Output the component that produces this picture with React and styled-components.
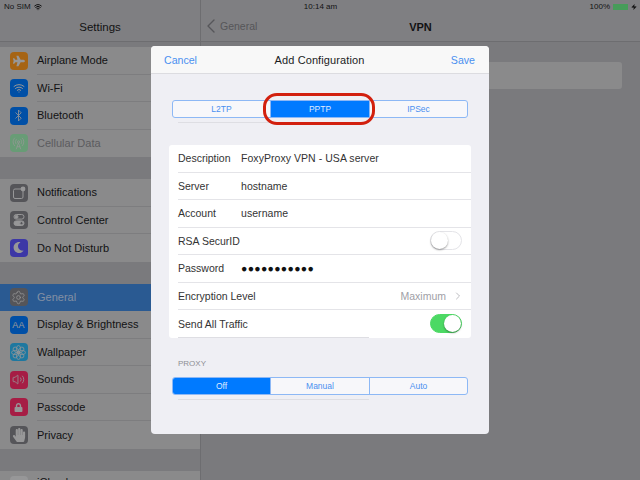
import React from "react";
import styled, { createGlobalStyle } from "styled-components";
import { Wifi, Bluetooth, RadioTower, Settings as Gear, Volume2, ChevronLeft, ChevronRight, Zap } from "lucide-react";
import { FaLock, FaMoon, FaHandPaper, FaPlane } from "react-icons/fa";

const Global = createGlobalStyle`
  html, body { margin: 0; padding: 0; background: #bcbcc0; }
  * { box-sizing: border-box; }
`;

const Page = styled.div`
  position: relative;
  display: flex;
  width: 640px;
  height: 480px;
  overflow: hidden;
  background: #bcbcc0;
  font-family: "Liberation Sans", Arial, sans-serif;
  color: #1c1c1e;
`;

const StatusBar = styled.div`
  position: absolute;
  top: 0;
  left: 0;
  right: 0;
  height: 13px;
  display: grid;
  grid-template-columns: 1fr auto 1fr;
  align-items: center;
  padding: 0 3px 0 4px;
  font-size: 8px;
  line-height: 13px;
`;

const StatusSide = styled.div`
  display: flex;
  align-items: center;
  gap: 3px;
  justify-content: ${(p) => (p.$end ? "flex-end" : "flex-start")};
`;

const Battery = styled.span`
  display: block;
  width: 15px;
  height: 6px;
  background: #6df08a;
  border: 1px solid #6df08a;
  border-right-width: 2px;
`;

const Sidebar = styled.div`
  flex: 0 0 201px;
  border-right: 1px solid #a8a8ac;
`;

const Nav = styled.div`
  display: flex;
  align-items: center;
  justify-content: center;
  position: relative;
  height: 42px;
  padding-top: 13px;
  background: #c4c4c8;
  border-bottom: 1px solid #a8a8ac;
  font-size: ${(p) => (p.$bold ? "11px" : "11.5px")};
  font-weight: ${(p) => (p.$bold ? 700 : 400)};
`;

const BackLink = styled.div`
  position: absolute;
  left: -2px;
  top: 14px;
  display: flex;
  align-items: center;
  font-size: 10.5px;
  font-weight: 400;
  color: #85858a;
  svg {
    margin-right: -3px;
  }
`;

const Group = styled.div`
  margin-top: ${(p) => p.$gap}px;
  background: #d4d4d6;
`;

const Row = styled.div`
  display: flex;
  align-items: center;
  gap: 9.5px;
  height: 27.5px;
  padding-left: 9.5px;
  font-size: 11px;
  background: ${(p) => (p.$selected ? "#418ae1" : "transparent")};
  color: ${(p) => (p.$selected ? "#c8dcfa" : p.$muted ? "#8e8e93" : "inherit")};
`;

const RowText = styled.div`
  flex: 1;
  align-self: stretch;
  display: flex;
  align-items: center;
  border-bottom: ${(p) => (p.$last ? "none" : "1px solid #c0c0c4")};
`;

const Tile = styled.div`
  flex: 0 0 18px;
  width: 18px;
  height: 18px;
  border-radius: 4px;
  display: flex;
  align-items: center;
  justify-content: center;
  background: ${(p) => p.$bg};
  color: ${(p) => p.$fg || "#e8e8ea"};
  font-size: 9px;
  letter-spacing: 0.3px;
`;

const CloudRow = styled(Row)`
  align-items: flex-start;
  padding-top: 5px;
  height: 30px;
`;

const Detail = styled.div`
  flex: 1;
`;

const VpnCard = styled.div`
  height: 27px;
  margin: 20px 18px 0 21px;
  background: #d4d4d6;
  border-radius: 3px;
`;

const Scrim = styled.div`
  position: absolute;
  inset: 0;
  display: flex;
  align-items: center;
  justify-content: center;
  background: rgba(0, 0, 0, 0.35);
`;

const Modal = styled.div`
  position: relative;
  width: 338px;
  height: 388px;
  border-radius: 4px;
  background: #efeff4;
  overflow: hidden;
`;

const ModalHeader = styled.div`
  display: grid;
  grid-template-columns: 1fr auto 1fr;
  align-items: center;
  height: 28px;
  padding: 0 14px 0 13px;
  background: #f8f8f8;
  border-bottom: 1px solid #dcdce0;
  font-size: 11px;
`;

const HeaderTitle = styled.span`
  letter-spacing: 0.1px;
`;

const HeaderLink = styled.span`
  font-size: 10.6px;
  color: #4a90f0;
  text-align: ${(p) => (p.$end ? "right" : "left")};
`;

const ModalBody = styled.div`
  padding: 26px 21px 0 21px;
`;

const Segmented = styled.div`
  display: grid;
  grid-template-columns: 97px 99px 1fr;
  height: 18px;
  border: 1px solid #8db8f5;
  border-radius: 3px;
  overflow: hidden;
  background: #f7f7fa;
`;

const Segment = styled.div`
  display: flex;
  align-items: center;
  justify-content: center;
  font-size: 8.5px;
  color: ${(p) => (p.$active ? "#dfeaff" : "#4a90f0")};
  background: ${(p) => (p.$active ? "#007aff" : "transparent")};
  & + & {
    border-left: 1px solid #8db8f5;
  }
`;

const SegmentRule = styled.div`
  width: ${(p) => p.$width}px;
  height: 1px;
  margin: 4px 0 0 6px;
  background: #dedee3;
`;

const Ring = styled.div`
  position: absolute;
  left: 112px;
  top: 47px;
  width: 112px;
  height: 32px;
  border: 3px solid #d2200e;
  border-radius: 14px;
`;

const FormCard = styled.div`
  margin: 22px 0 0 -3px;
  width: 302px;
  background: #fff;
  border-radius: 3px;
  overflow: hidden;
`;

const FormRow = styled.div`
  display: flex;
  align-items: center;
  height: 27.5px;
  margin-left: 9px;
  padding-right: 9px;
  font-size: 10.5px;
  color: #333;
  border-bottom: ${(p) => (p.$last ? "none" : "1px solid #e4e4e8")};
`;

const FormLabel = styled.div`
  flex: ${(p) => (p.$wide ? "1" : "0 0 63px")};
`;

const FormValue = styled.div`
  flex: 1;
  letter-spacing: 0.05px;
`;

const Dots = styled.div`
  flex: 1;
  font-size: 10.5px;
  letter-spacing: 0.3px;
  color: #111;
`;

const Trailing = styled.div`
  display: flex;
  align-items: center;
  gap: 6px;
  color: #a0a0a6;
  svg {
    margin-right: -2px;
  }
`;

const CardRule = styled.div`
  width: 191px;
  height: 1px;
  margin: -1px 0 0 9px;
  background: #dedee3;
`;

const Toggle = styled.div`
  position: relative;
  width: 32px;
  height: 19px;
  border-radius: 10px;
  background: ${(p) => (p.$on ? "#4cd964" : "#fff")};
  border: 1px solid ${(p) => (p.$on ? "#4cd964" : "#e4e4e8")};
`;

const Knob = styled.div`
  position: absolute;
  top: 0;
  left: ${(p) => (p.$on ? "13px" : "0")};
  width: 17px;
  height: 17px;
  border-radius: 50%;
  background: #fff;
  box-shadow: 0 1px 2px rgba(0, 0, 0, 0.4);
`;

const SectionLabel = styled.div`
  margin: 21px 0 8px 6px;
  height: 10px;
  line-height: 10px;
  font-size: 8px;
  color: #8e8e93;
`;

const NotificationGlyph = () => (
  <svg width="14" height="14" viewBox="0 0 14 14" fill="none">
    <rect x="1.5" y="3" width="9.5" height="9.5" rx="1.5" stroke="#e8e8ea" strokeWidth="1" />
    <circle cx="11" cy="3" r="2.4" fill="#e8e8ea" />
  </svg>
);

const ControlGlyph = () => (
  <svg width="14" height="14" viewBox="0 0 14 14" fill="none" stroke="#e8e8ea">
    <rect x="2" y="1.5" width="10" height="4.6" rx="2.3" />
    <circle cx="4.5" cy="3.8" r="1.5" fill="#e8e8ea" />
    <rect x="2" y="7.9" width="10" height="4.6" rx="2.3" fill="#e8e8ea" />
    <circle cx="9.5" cy="10.2" r="1.6" fill="#838389" />
  </svg>
);

const FlowerGlyph = () => (
  <svg width="15" height="15" viewBox="0 0 16 16" fill="none" stroke="#e8e8ea" strokeWidth="0.8">
    {[0, 45, 90, 135, 180, 225, 270, 315].map((a) => (
      <ellipse key={a} cx="8" cy="4" rx="2.2" ry="3.4" transform={`rotate(${a} 8 8)`} />
    ))}
  </svg>
);

const groups = [
  {
    gap: 5,
    rows: [
      { label: "Airplane Mode", bg: "#ff9a20", icon: <FaPlane size={12} /> },
      { label: "Wi-Fi", bg: "#007aff", icon: <Wifi size={12} strokeWidth={2} /> },
      { label: "Bluetooth", bg: "#007aff", icon: <Bluetooth size={13} strokeWidth={1.5} /> },
      { label: "Cellular Data", bg: "#a0f0b5", muted: true, icon: <RadioTower size={13} strokeWidth={1.3} /> },
    ],
  },
  {
    gap: 22,
    rows: [
      { label: "Notifications", bg: "#838389", icon: <NotificationGlyph /> },
      { label: "Control Center", bg: "#838389", icon: <ControlGlyph /> },
      { label: "Do Not Disturb", bg: "#5c55ff", icon: <FaMoon size={11} /> },
    ],
  },
  {
    gap: 22,
    rows: [
      { label: "General", bg: "#838389", selected: true, icon: <Gear size={15} strokeWidth={1.2} /> },
      { label: "Display & Brightness", bg: "#007aff", icon: "AA" },
      { label: "Wallpaper", bg: "#2eb8f6", icon: <FlowerGlyph /> },
      { label: "Sounds", bg: "#ff2d6a", icon: <Volume2 size={13} strokeWidth={1.5} /> },
      { label: "Passcode", bg: "#ff2d6a", icon: <FaLock size={9} /> },
      { label: "Privacy", bg: "#838389", icon: <FaHandPaper size={14} /> },
    ],
  },
];

const Segments = ({ items, active }) => (
  <Segmented>
    {items.map((item) => (
      <Segment key={item} $active={item === active}>{item}</Segment>
    ))}
  </Segmented>
);

export default function App() {
  return (
    <Page>
      <Global />
      <Sidebar>
        <Nav>Settings</Nav>
        {groups.map((group, g) => (
          <Group key={g} $gap={group.gap}>
            {group.rows.map((row, i) => (
              <Row key={row.label} $selected={row.selected} $muted={row.muted}>
                <Tile $bg={row.bg}>{row.icon}</Tile>
                <RowText $last={row.selected || i === group.rows.length - 1}>{row.label}</RowText>
              </Row>
            ))}
          </Group>
        ))}
        <Group $gap={22}>
          <CloudRow>
            <Tile $bg="#e8e8ea">
              <svg width="14" height="14" viewBox="0 0 14 14"><circle cx="7" cy="6" r="3.5" fill="#1f86d8" /></svg>
            </Tile>
            <div>iCloud</div>
          </CloudRow>
        </Group>
      </Sidebar>
      <Detail>
        <Nav $bold>
          <BackLink><ChevronLeft size={24} strokeWidth={1.4} />General</BackLink>
          VPN
        </Nav>
        <VpnCard />
      </Detail>
      <StatusBar>
        <StatusSide>
          No SIM
          <Wifi size={8} strokeWidth={3} />
        </StatusSide>
        <div>10:14 am</div>
        <StatusSide $end>
          100%
          <Battery />
          <Zap size={6} fill="#1c1c1e" strokeWidth={1} />
        </StatusSide>
      </StatusBar>
      <Scrim>
        <Modal>
          <ModalHeader>
            <HeaderLink>Cancel</HeaderLink>
            <HeaderTitle>Add Configuration</HeaderTitle>
            <HeaderLink $end>Save</HeaderLink>
          </ModalHeader>
          <ModalBody>
            <Segments items={["L2TP", "PPTP", "IPSec"]} active="PPTP" />
            <SegmentRule $width={92} />
            <FormCard>
              <FormRow><FormLabel>Description</FormLabel><FormValue>FoxyProxy VPN - USA server</FormValue></FormRow>
              <FormRow><FormLabel>Server</FormLabel><FormValue>hostname</FormValue></FormRow>
              <FormRow><FormLabel>Account</FormLabel><FormValue>username</FormValue></FormRow>
              <FormRow>
                <FormLabel $wide>RSA SecurID</FormLabel>
                <Toggle><Knob /></Toggle>
              </FormRow>
              <FormRow><FormLabel>Password</FormLabel><Dots>●●●●●●●●●●●</Dots></FormRow>
              <FormRow>
                <FormLabel $wide>Encryption Level</FormLabel>
                <Trailing>Maximum <ChevronRight size={12} strokeWidth={1.4} /></Trailing>
              </FormRow>
              <FormRow $last>
                <FormLabel $wide>Send All Traffic</FormLabel>
                <Toggle $on><Knob $on /></Toggle>
              </FormRow>
              <CardRule />
            </FormCard>
            <SectionLabel>PROXY</SectionLabel>
            <Segments items={["Off", "Manual", "Auto"]} active="Off" />
            <SegmentRule $width={191} />
          </ModalBody>
          <Ring />
        </Modal>
      </Scrim>
    </Page>
  );
}
